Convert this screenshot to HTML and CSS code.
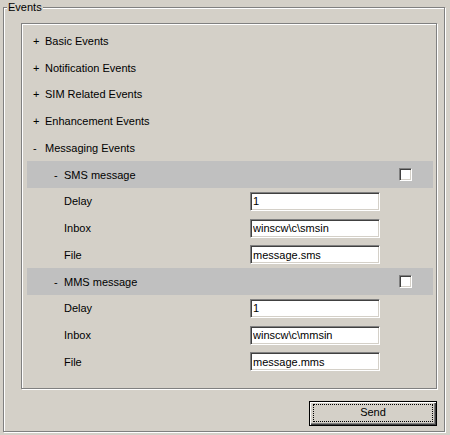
FILE: index.html
```html
<!DOCTYPE html>
<html>
<head>
<meta charset="utf-8">
<link rel="stylesheet" href="styles.css">
</head>
<body>
<div class="group">
  <div class="group-title">Events</div>
  <div class="panel">
    <div class="row l1"><span class="sign">+</span>Basic Events</div>
    <div class="row l1"><span class="sign">+</span>Notification Events</div>
    <div class="row l1"><span class="sign">+</span>SIM Related Events</div>
    <div class="row l1"><span class="sign">+</span>Enhancement Events</div>
    <div class="row l1"><span class="sign">-</span>Messaging Events</div>
    <div class="row l2 bar"><span class="sign sign2">-</span>SMS message<span class="check"></span></div>
    <div class="row param"><span class="label">Delay</span><input class="field" value="1"></div>
    <div class="row param"><span class="label">Inbox</span><input class="field" value="winscw\c\smsin"></div>
    <div class="row param"><span class="label">File</span><input class="field" value="message.sms"></div>
    <div class="row l2 bar"><span class="sign sign2">-</span>MMS message<span class="check"></span></div>
    <div class="row param"><span class="label">Delay</span><input class="field" value="1"></div>
    <div class="row param"><span class="label">Inbox</span><input class="field" value="winscw\c\mmsin"></div>
    <div class="row param"><span class="label">File</span><input class="field" value="message.mms"></div>
  </div>
  <div class="actions">
    <button class="btn"><span class="focus">Send</span></button>
  </div>
</div>
</body>
</html>
```
FILE: styles.css
```css
html, body {
  margin: 0;
  padding: 0;
  background: #d4d0c8;
  width: 450px;
  height: 435px;
  overflow: hidden;
  font-family: "Liberation Sans", Arial, sans-serif;
  font-size: 11px;
  color: #000;
}

.group {
  box-sizing: border-box;
  margin: 7px 0 0 3px;
  width: 442px;
  height: 425px;
  border: 1px solid #808080;
  box-shadow: inset 1px 1px #fff, 1px 1px #fff;
  padding: 0 7px 0 17px;
}

.group-title {
  width: max-content;
  margin: -8px 0 0 -14px;
  padding: 0 1px 0 1px;
  line-height: 14px;
  height: 14px;
  background: #d4d0c8;
}

.panel {
  box-sizing: border-box;
  margin-top: 9px;
  height: 366px;
  border: 1px solid #808080;
  box-shadow: inset 1px 1px #fff, 1px 1px #fff;
  padding: 3.6px 3px 0 5px;
}

.row {
  display: flex;
  align-items: center;
  height: 26.75px;
  white-space: nowrap;
}

.l1 {
  padding-left: 6px;
}

.sign {
  display: inline-block;
  width: 12px;
}

.l2 {
  padding-left: 27px;
}

.sign2 {
  width: 10px;
}

.bar {
  background: #c0c0c0;
}

.check {
  box-sizing: border-box;
  width: 13px;
  height: 13px;
  margin-left: auto;
  margin-right: 21px;
  background: #fff;
  border: 1px solid;
  border-color: #808080 #fff #fff #808080;
  box-shadow: inset 1px 1px #404040, inset -1px -1px #d4d0c8;
}

.param {
  padding-left: 37px;
}

.label {
  width: 186px;
  flex: 0 0 186px;
}

.field {
  box-sizing: border-box;
  width: 130px;
  height: 19px;
  margin: 0;
  padding: 0 0 0 2px;
  border: 1px solid;
  border-color: #808080 #fff #fff #808080;
  box-shadow: inset 1px 1px #404040, inset -1px -1px #d4d0c8;
  background: #fff;
  font-family: "Liberation Sans", Arial, sans-serif;
  font-size: 11px;
  color: #000;
  outline: none;
}

.actions {
  display: flex;
  justify-content: flex-end;
  margin-top: 12px;
}

.btn {
  box-sizing: border-box;
  width: 128px;
  height: 25px;
  margin: 0;
  padding: 0;
  border: 1px solid #000;
  background: #d4d0c8;
  box-shadow: inset 1px 1px #fff, inset -1px -1px #404040, inset -2px -2px #808080;
  font-family: "Liberation Sans", Arial, sans-serif;
  font-size: 11px;
  color: #000;
  display: flex;
}

.focus {
  flex: 1;
  margin: 2px 3px 3px 3px;
  border: 1px dotted #000;
  line-height: 15px;
  text-align: center;
}
```
